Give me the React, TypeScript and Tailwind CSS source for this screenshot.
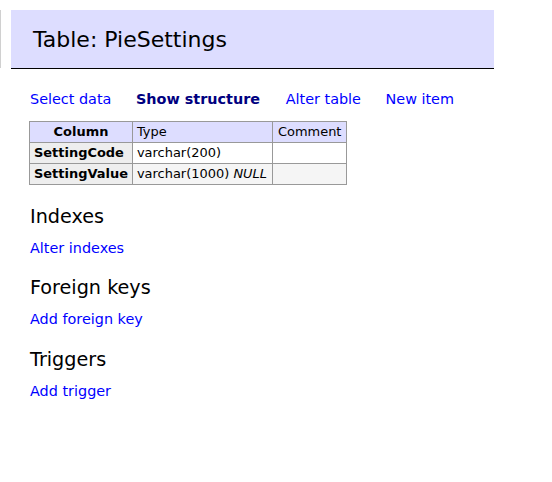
export default function App() {
  return (
    <div className="relative min-h-[482px] bg-white text-black font-['DejaVu_Sans',Verdana,sans-serif] text-[14.4px] leading-[1.25]">
      {/* edge of the cut-off side menu */}
      <div className="absolute left-0 top-[10px] h-[58px] w-px bg-[#d0d0d0]" />

      <div className="pl-[30px] pt-[10px] mr-[58px]">
        <h2 className="-ml-[19px] mb-[21px] bg-[#ddf] border-b border-black px-[22px] py-[15.5px] text-[22px] leading-[27px] font-normal">
          Table: PieSettings
        </h2>

        <p className="leading-[18px] whitespace-nowrap">
          <a href="#" className="text-[#00f] mr-[20px]">Select data</a>{" "}
          <a href="#" className="text-[#000080] font-bold mr-[21px]">Show structure</a>{" "}
          <a href="#" className="text-[#00f] mr-[20px]">Alter table</a>{" "}
          <a href="#" className="text-[#00f]">New item</a>
        </p>

        <table className="-ml-px mt-[13px] border-collapse text-[12.96px] leading-[16px]">
          <thead>
            <tr className="bg-[#ddf]">
              <th className="border border-[#999] px-[6px] py-[2px] text-center font-bold">Column</th>
              <td className="border border-[#999] px-[4px] py-[2px] text-left">Type</td>
              <td className="border border-[#999] px-[5px] py-[2px] text-left">Comment</td>
            </tr>
          </thead>
          <tbody>
            <tr>
              <th className="border border-[#999] bg-[#eee] px-[4px] py-[2px] text-left font-bold">SettingCode</th>
              <td className="border border-[#999] px-[4px] py-[2px]">varchar(200)</td>
              <td className="border border-[#999] px-[5px] py-[2px]"></td>
            </tr>
            <tr className="bg-[#f5f5f5]">
              <th className="border border-[#999] bg-[#eee] px-[4px] py-[2px] text-left font-bold">SettingValue</th>
              <td className="border border-[#999] pl-[4px] pr-[5px] py-[2px]">
                varchar(1000) <i>NULL</i>
              </td>
              <td className="border border-[#999] px-[5px] py-[2px]"></td>
            </tr>
          </tbody>
        </table>

        <h3 className="mt-[19.7px] text-[19.2px] leading-[23.4px] font-normal">Indexes</h3>
        <p className="mt-[10.5px] leading-[18px]">
          <a href="#" className="text-[#00f]">Alter indexes</a>
        </p>

        <h3 className="mt-[19.7px] text-[19.2px] leading-[23.4px] font-normal">Foreign keys</h3>
        <p className="mt-[10.5px] leading-[18px]">
          <a href="#" className="text-[#00f]">Add foreign key</a>
        </p>

        <h3 className="mt-[19.7px] text-[19.2px] leading-[23.4px] font-normal">Triggers</h3>
        <p className="mt-[10.5px] leading-[18px]">
          <a href="#" className="text-[#00f]">Add trigger</a>
        </p>
      </div>
    </div>
  );
}
